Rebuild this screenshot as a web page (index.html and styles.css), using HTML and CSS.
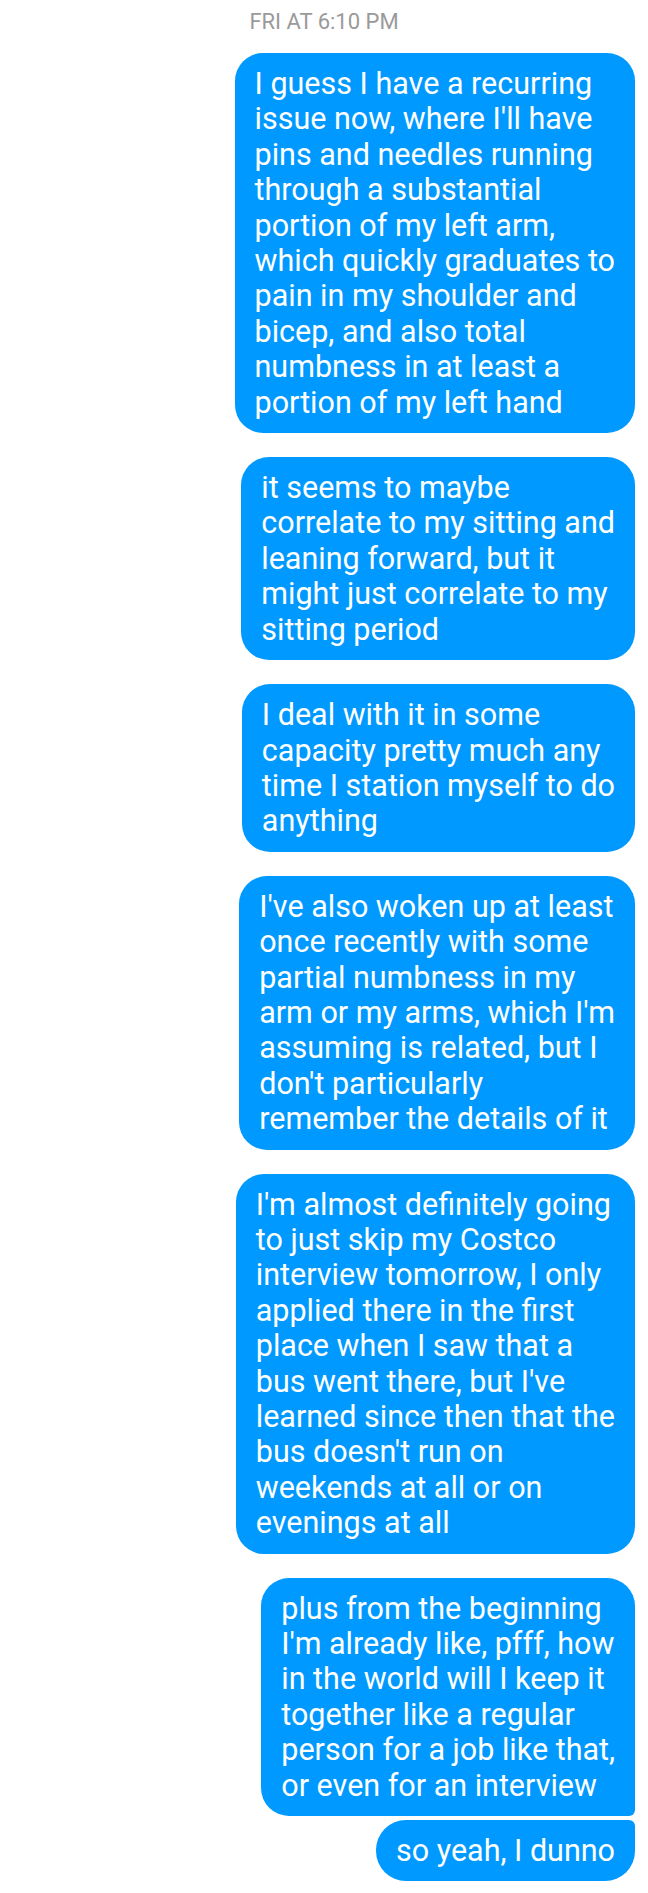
FILE: index.html
```html
<!DOCTYPE html>
<html>
<head>
<meta charset="utf-8">
<link rel="stylesheet" href="styles.css">
</head>
<body>
<div class="chat">
  <div class="stamp">FRI AT 6:10 PM</div>
  <div class="msg">I guess I have a recurring<br>issue now, where I'll have<br>pins and needles running<br>through a substantial<br>portion of my left arm,<br>which quickly graduates to<br>pain in my shoulder and<br>bicep, and also total<br>numbness in at least a<br>portion of my left hand</div>
  <div class="msg">it seems to maybe<br>correlate to my sitting and<br>leaning forward, but it<br>might just correlate to my<br>sitting period</div>
  <div class="msg">I deal with it in some<br>capacity pretty much any<br>time I station myself to do<br>anything</div>
  <div class="msg">I've also woken up at least<br>once recently with some<br>partial numbness in my<br>arm or my arms, which I'm<br>assuming is related, but I<br>don't particularly<br>remember the details of it</div>
  <div class="msg">I'm almost definitely going<br>to just skip my Costco<br>interview tomorrow, I only<br>applied there in the first<br>place when I saw that a<br>bus went there, but I've<br>learned since then that the<br>bus doesn't run on<br>weekends at all or on<br>evenings at all</div>
  <div class="group">
    <div class="msg first">plus from the beginning<br>I'm already like, pfff, how<br>in the world will I keep it<br>together like a regular<br>person for a job like that,<br>or even for an interview</div>
    <div class="msg last">so yeah, I dunno</div>
  </div>
</div>
</body>
</html>
```
FILE: styles.css
```css
html, body {
  margin: 0;
  padding: 0;
  background: #ffffff;
}
.chat {
  display: flex;
  flex-direction: column;
  align-items: flex-end;
  gap: 24px;
  padding: 9px 13px 0 0;
  font-family: Roboto, "Noto Sans", sans-serif;
}
.stamp {
  align-self: center;
  margin-left: 13px;
  color: #9a9a9a;
  font-size: 22px;
  line-height: 26px;
  margin-bottom: -6px;
}
.msg {
  background: #0099ff;
  color: #ffffff;
  font-size: 30.5px;
  line-height: 35.4px;
  padding: 13px 20px;
  border-radius: 28px;
  white-space: nowrap;
}
.group {
  display: flex;
  flex-direction: column;
  align-items: flex-end;
  gap: 4px;
}
.msg.first {
  border-bottom-right-radius: 6px;
}
.msg.last {
  border-radius: 30px 6px 30px 30px;
}
```
